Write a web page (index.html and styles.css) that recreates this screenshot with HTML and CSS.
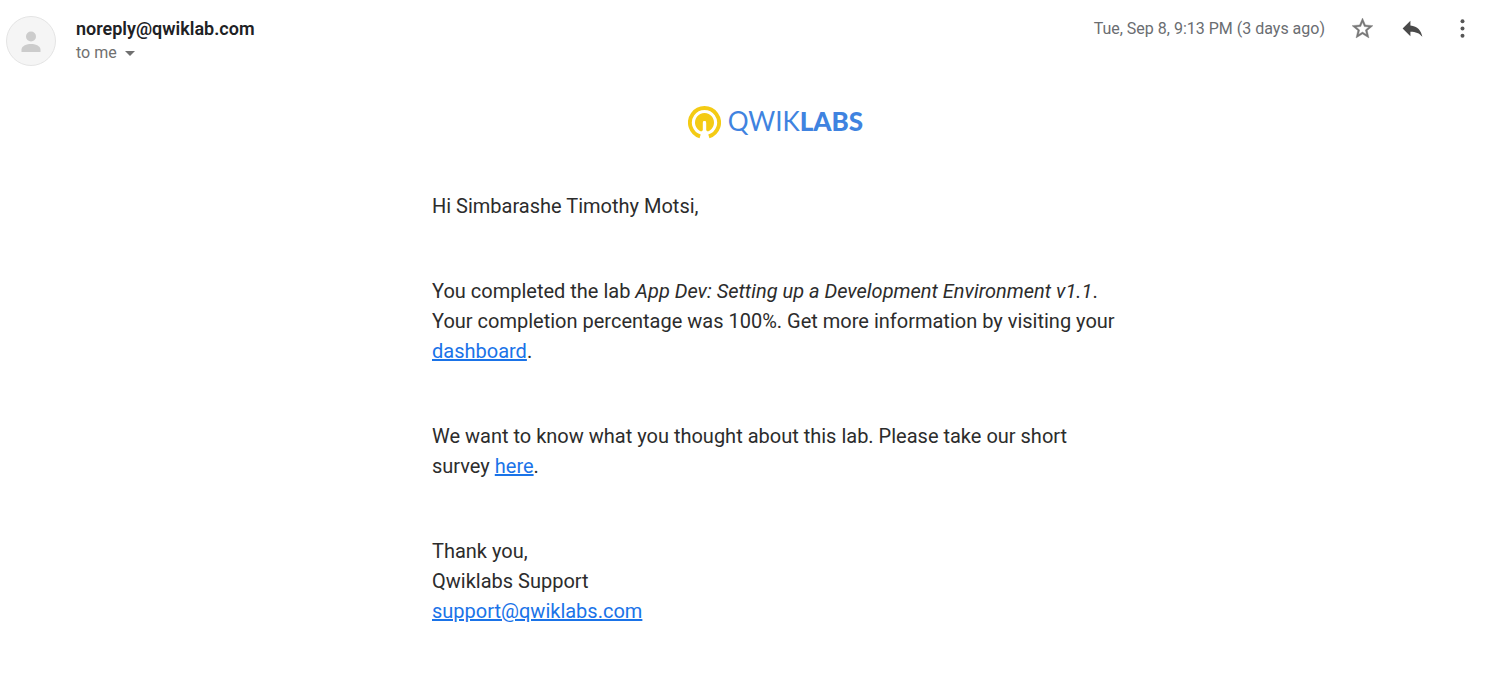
FILE: index.html
```html
<!DOCTYPE html>
<html lang="en">
<head>
<meta charset="utf-8">
<meta name="viewport" content="width=device-width, initial-scale=1">
<title>Qwiklabs message</title>
<link rel="stylesheet" href="styles.css">
</head>
<body>
<article class="message">
  <header class="message-header">
    <svg class="avatar" viewBox="0 0 50 50" aria-hidden="true">
      <circle cx="25" cy="25" r="24.5" fill="#f5f5f5" stroke="#e4e4e4"/>
      <circle cx="25" cy="20.500" r="5" fill="#ccc"/>
      <path d="M15.500 36v-2.500c0-3.700 5.500-5.500 9.500-5.500s9.500 1.800 9.500 5.500V36z" fill="#ccc"/>
    </svg>
    <div class="people">
      <h1 class="sender">noreply@qwiklab.com</h1>
      <button class="recipient" type="button">to me
        <svg class="caret" viewBox="0 0 10 5" aria-hidden="true"><path d="M0 0h10L5 5z" fill="currentColor"/></svg>
      </button>
    </div>
    <div class="tools">
      <time class="date">Tue, Sep 8, 9:13 PM (3 days ago)</time>
      <button class="tool" type="button" aria-label="Star">
        <svg class="icon" viewBox="0 0 24 24"><path fill="#777" stroke="#777" stroke-width=".4" d="M22 9.240l-7.190-.620L12 2 9.190 8.630 2 9.240l5.460 4.730L5.820 21 12 17.270 18.180 21l-1.630-7.030L22 9.240zM12 15.400l-3.760 2.270 1-4.280-3.320-2.880 4.380-.380L12 6.100l1.710 4.040 4.380.380-3.320 2.880 1 4.280L12 15.400z"/></svg>
      </button>
      <button class="tool" type="button" aria-label="Reply">
        <svg class="icon" viewBox="0 0 24 24"><path fill="#4a4a4a" d="M10 9V4.500L2.500 12l7.500 7.500V15c5 0 8.700 1.300 11.500 5-1.300-6-4.500-10.500-11.500-11z"/></svg>
      </button>
      <button class="tool" type="button" aria-label="More">
        <svg class="icon" viewBox="0 0 24 24" fill="#555"><circle cx="12" cy="5" r="1.900"/><circle cx="12" cy="12" r="1.900"/><circle cx="12" cy="19" r="1.900"/></svg>
      </button>
    </div>
  </header>
  <div class="message-body">
    <div class="logo">
      <svg class="logo-mark" viewBox="0 0 34 34" aria-hidden="true">
        <path d="M12.500 31.400A15 15 0 1 1 21.500 31.400" fill="none" stroke="#f4cb14" stroke-width="4"/>
        <path d="M13.500 26.200A9.800 9.800 0 1 1 20.500 26.200L18.500 25V17a1.500 1.500 0 0 0-3 0V25z" fill="#f4cb14"/>
        <path d="M17 17.200V34" stroke="#fff" stroke-width="3.500" stroke-linecap="round"/>
      </svg>
      <span class="logo-text">QWIK<strong class="logo-strong">LABS</strong></span>
    </div>
    <div class="letter">
      <p class="paragraph">Hi Simbarashe Timothy Motsi,</p>
      <p class="paragraph">You completed the lab <em>App Dev: Setting up a Development Environment v1.1</em>. Your completion percentage was 100%. Get more information by visiting your <a class="link" href="#dashboard">dashboard</a>.</p>
      <p class="paragraph">We want to know what you thought about this lab. Please take our short survey <a class="link" href="#survey">here</a>.</p>
      <p class="paragraph">Thank you,<br>Qwiklabs Support<br><a class="link" href="mailto:support@qwiklabs.com">support@qwiklabs.com</a></p>
    </div>
  </div>
</article>
</body>
</html>
```
FILE: styles.css
```css
body {
  margin: 0;
  background: #fff;
  color: #2c2c2c;
  font-family: Roboto, "Liberation Sans", sans-serif;
}

button {
  border: 0;
  padding: 0;
  background: none;
  font: inherit;
  cursor: pointer;
}

.message {
  padding: 16px 0 24px 6px;
}

.message-header {
  display: flex;
  align-items: flex-start;
  gap: 20px;
}

.avatar {
  width: 50px;
  height: 50px;
  flex: none;
}

.people {
  flex: 1;
  display: flex;
  flex-direction: column;
  align-items: flex-start;
}

.sender {
  margin: 0;
  font-size: 18px;
  line-height: 25px;
  font-weight: 600;
  color: #202124;
}

.recipient {
  display: flex;
  align-items: center;
  gap: 8px;
  font-size: 16px;
  line-height: 24px;
  color: #707070;
}

.caret {
  width: 10px;
  height: 5px;
}

.tools {
  display: flex;
  align-items: center;
}

.date {
  margin-right: 12px;
  font-size: 16px;
  line-height: 24px;
  color: #6a6d71;
}

.tool {
  display: flex;
  justify-content: center;
  width: 50px;
}

.icon {
  width: 25px;
  height: 25px;
}

.message-body {
  padding: 40px 12px 0 70px;
}

.logo {
  display: flex;
  align-items: flex-start;
  justify-content: center;
  gap: 7px;
}

.logo-mark {
  width: 33px;
  height: 33px;
}

.logo-text {
  font-family: Lato, sans-serif;
  font-size: 26px;
  line-height: 30px;
  font-weight: 400;
  color: #3f83e0;
}

.logo-strong {
  font-weight: 900;
}

.letter {
  max-width: 687px;
  margin: 52px auto 0;
  font-size: 20px;
  line-height: 30px;
}

.paragraph {
  margin: 0 0 55px;
}

.paragraph:last-child {
  margin-bottom: 0;
}

.link {
  color: #1a73e8;
}
```
